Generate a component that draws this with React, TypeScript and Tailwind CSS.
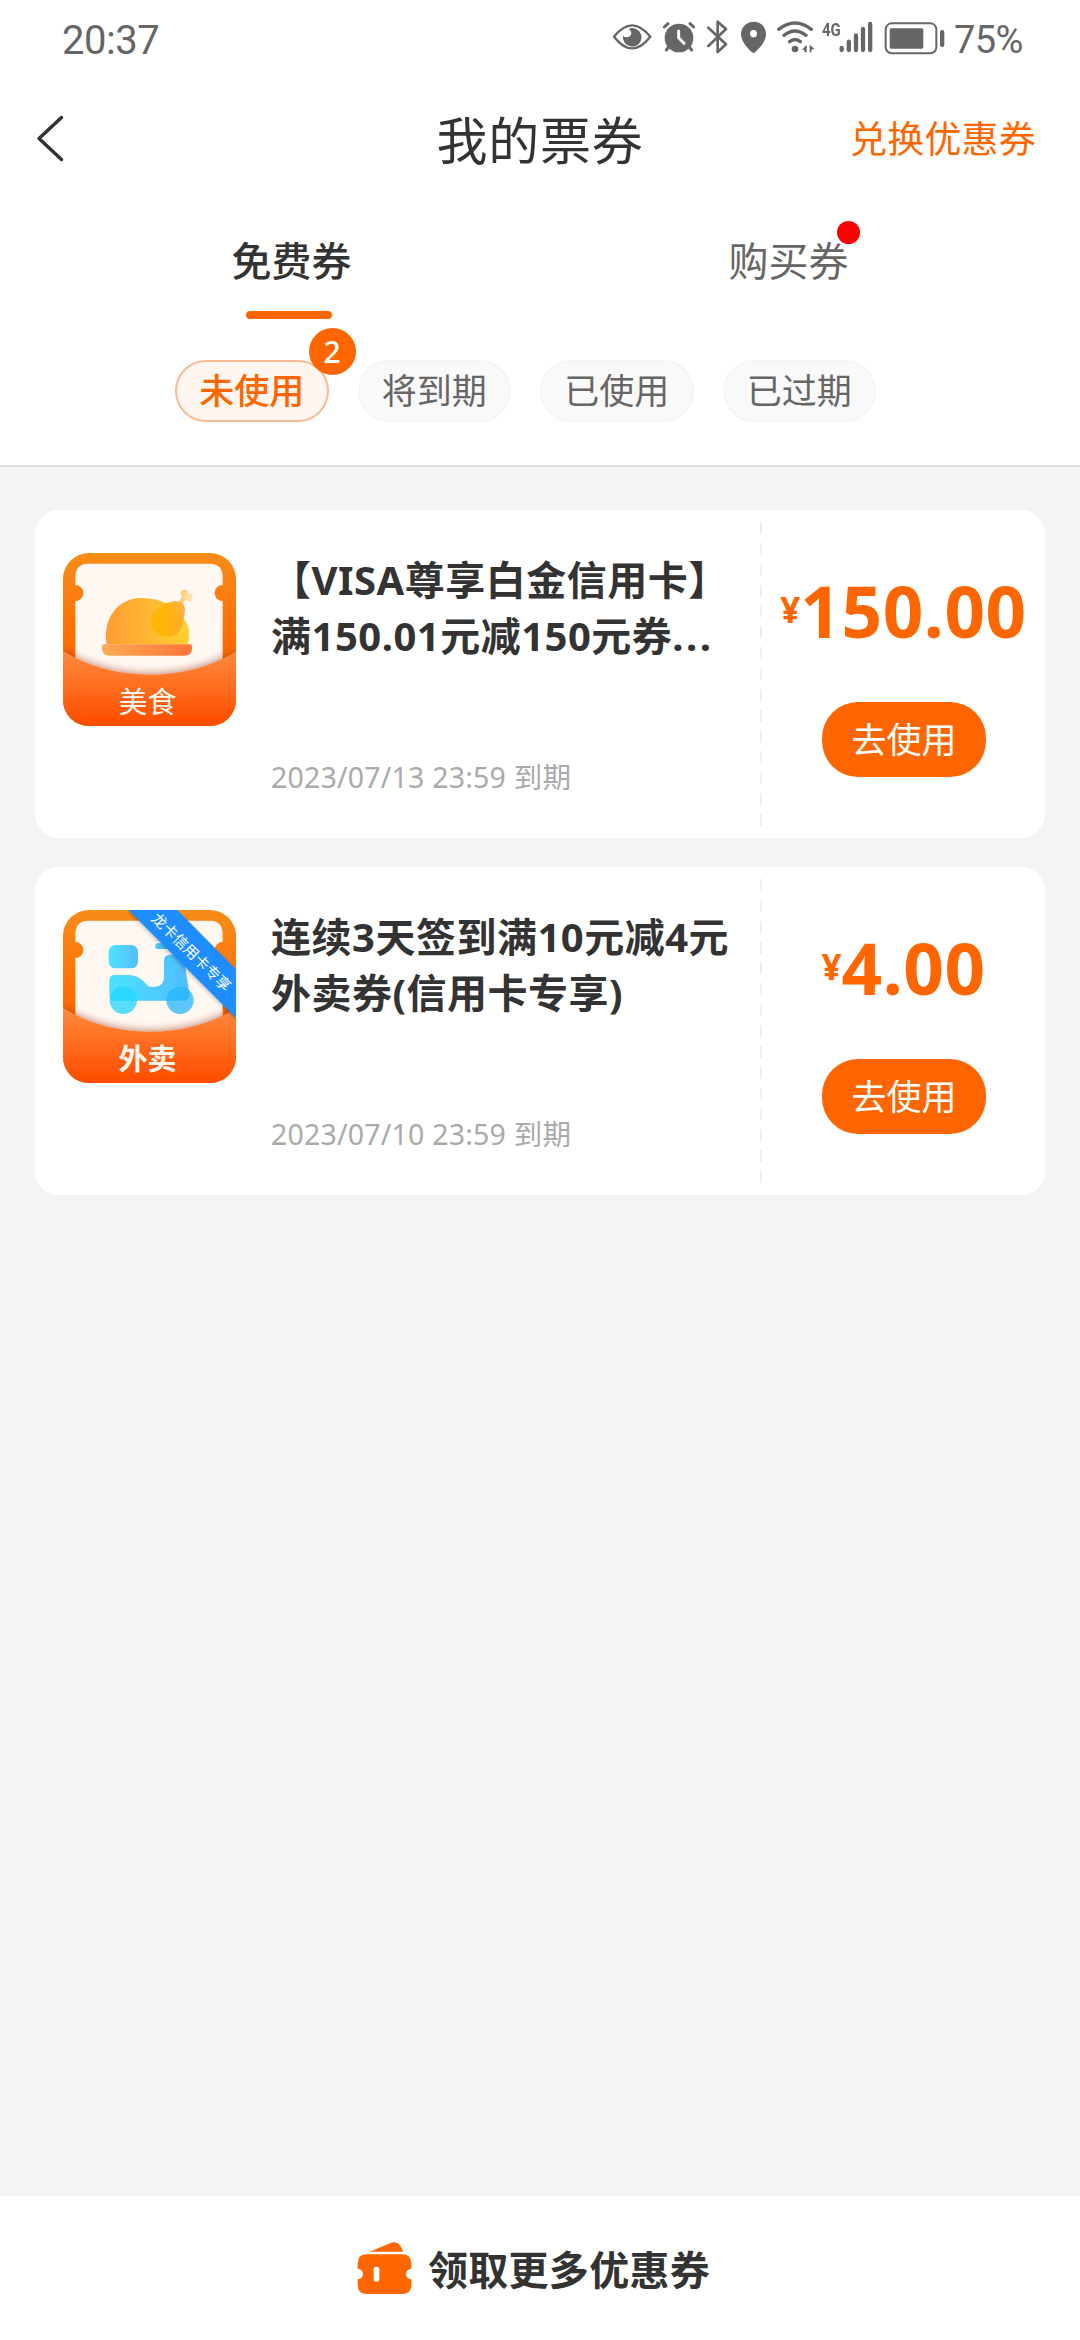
import { ReactNode, useState } from 'react'

type Coupon = {
  id: number
  kind: 'food' | 'takeout'
  title: string
  truncated?: boolean
  expires: string
  amount: string
}

const COUPONS: Coupon[] = [
  {
    id: 1,
    kind: 'food',
    title: '【VISA尊享白金信用卡】满150.01元减150元券',
    truncated: true,
    expires: '2023/07/13 23:59 到期',
    amount: '150.00',
  },
  {
    id: 2,
    kind: 'takeout',
    title: '连续3天签到满10元减4元外卖券(信用卡专享)',
    expires: '2023/07/10 23:59 到期',
    amount: '4.00',
  },
]

const FILTERS = ['未使用', '将到期', '已使用', '已过期']

function StatusBar() {
  return (
    <div className="flex h-20 items-start pl-[62px] text-[#666]">
      <span className="mt-[18px] w-[550px] font-[Roboto] text-[40px] leading-[46px] tracking-[-0.5px]">20:37</span>
      <div className="mt-5 flex h-[35px] shrink-0">
        <svg className="h-[35px] w-10" viewBox="36 60 120 105" fill="none">
          <path d="M42 110Q96 42 151 110Q96 180 42 110Z" stroke="currentColor" strokeWidth="7" strokeLinejoin="round" />
          <path d="M98 84A28 28 0 1 1 69 107A15 15 0 0 0 92 106Q98 95 86 88Q91 84 98 84Z" fill="currentColor" />
        </svg>
        <svg className="ml-2.5 h-[35px] w-[34px]" viewBox="186 60 102 105" fill="none" stroke="currentColor" strokeLinecap="round">
          <circle cx="237" cy="114" r="43" fill="currentColor" stroke="none" />
          <path d="M193 81L204 71M281 81L270 71M206 141L199 150M268 141L275 150" strokeWidth="9" />
          <path d="M236 93V113L252 130" stroke="#fff" strokeWidth="9" strokeLinejoin="round" />
        </svg>
        <svg className="ml-2.5 h-[35px] w-[23px]" viewBox="318 60 69 105" fill="none">
          <path d="M325 83L378 133L353 156V65L378 87L325 138" stroke="currentColor" strokeWidth="8" strokeLinecap="round" strokeLinejoin="round" />
        </svg>
        <svg className="ml-[11px] h-[35px] w-[27px]" viewBox="420 60 81 105">
          <path fillRule="evenodd" fill="currentColor" d="M461 65C483 65 498 82 498 103C498 125 478 145 465 157Q461 161 456 157C443 145 423 125 423 103C423 82 439 65 461 65ZM461 90C454 90 450 95 450 101S454 112 461 112S471 107 471 101S467 90 461 90Z" />
        </svg>
        <svg className="ml-[9px] h-[35px] w-10" viewBox="528 60 120 105" fill="none">
          <path d="M536 88Q585 50 634 88M552 106Q585 80 618 106M569 125Q585 112 601 125" stroke="currentColor" strokeWidth="10" strokeLinecap="round" />
          <circle cx="585" cy="147" r="10" fill="currentColor" />
          <path d="M606 149L620 134V157H613V149ZM629 134L644 147H637V150H634V157H629Z" fill="currentColor" />
        </svg>
        <span className="ml-1.5 mt-px w-[17px] origin-left scale-x-[0.83] font-[Roboto] text-[18px] font-bold leading-[18px]">4G</span>
        <svg className="h-[35px] w-[34px]" viewBox="57 60 102 105">
          <path d="M65 144V150M86.500 125V150M108 106V150M129 87V150M150.500 72V150" stroke="currentColor" strokeWidth="13" strokeLinecap="round" />
        </svg>
        <svg className="ml-[11px] h-[35px] w-[61px]" viewBox="192 60 183 105">
          <rect x="197" y="70" width="152" height="90" rx="18" fill="none" stroke="currentColor" strokeWidth="6" />
          <rect x="209" y="85" width="101" height="61" rx="5" fill="currentColor" />
          <rect x="360" y="90" width="13" height="51" rx="6" fill="currentColor" />
        </svg>
      </div>
      <span className="ml-[9px] mt-[18px] font-[Roboto] text-[38px] leading-[44px] tracking-[-0.6px]">75%</span>
    </div>
  )
}

function TakeoutArt() {
  return (
    <>
      <rect x="137" y="105" width="88" height="70" rx="20" fill="url(#takeout-box)" />
      <rect x="277" y="100" width="80" height="17" rx="7" fill="#4fc3fb" />
      <path
        d="M139 211Q139 195 155 195H194C226 195 243 214 254 227Q257 230 264 230H274C294 230 303 217 303 200V153Q303 134 320 134H340Q361 134 364 153L379 250Q382 272 362 272H157Q139 272 139 254Z"
        fill="url(#takeout-body)"
      />
      <circle cx="181" cy="271" r="41" fill="#1fd6fd" fillOpacity="0.75" />
      <circle cx="351" cy="271" r="41" fill="#25b6fd" fillOpacity="0.75" />
    </>
  )
}

function FoodArt() {
  return (
    <>
      <path d="M131 274C118 192 168 135 235 135C295 135 338 160 361 196C381 221 383 247 374 274Z" fill="url(#food-body)" />
      <path d="M352 150L366 130" stroke="#ffce7c" strokeWidth="13" />
      <circle cx="364" cy="121" r="11" fill="#ffcf7e" />
      <circle cx="377" cy="133" r="12" fill="#ffe0aa" />
      <path
        d="M298 157C322 142 353 140 361 154C371 169 362 195 359 212C352 240 332 252 312 252C284 252 264 231 264 205C264 184 278 169 298 157Z"
        fill="url(#food-leg)"
        fillOpacity="0.9"
      />
      <path d="M123 274H381Q387 274 387 280V286Q387 308 365 308H139Q117 308 117 286V280Q117 274 123 274Z" fill="url(#food-plate)" />
    </>
  )
}

function CouponIcon({ kind }: { kind: Coupon['kind'] }) {
  return (
    <div className="relative size-[173px] shrink-0">
      <svg className="size-[173px] rounded-[26px]" viewBox="0 0 519 519">
        <defs>
          <linearGradient id={`${kind}-frame`} x1="0" y1="0" x2="0" y2="1">
            <stop offset="0" stopColor="#f88d19" />
            <stop offset="0.5" stopColor="#ff6c02" />
          </linearGradient>
          <linearGradient id={`${kind}-pocket`} x1="0" y1="0" x2="0" y2="1">
            <stop offset="0" stopColor="#ff8a3d" />
            <stop offset="0.95" stopColor="#ff4f00" />
          </linearGradient>
          <filter id={`${kind}-shadow`} x="-10%" y="-30%" width="120%" height="150%">
            <feDropShadow dx="0" dy="-8" stdDeviation="10" floodColor="#8a2500" floodOpacity="0.4" />
          </filter>
          <linearGradient id="food-body">
            <stop offset="0" stopColor="#ff9d35" />
            <stop offset="1" stopColor="#ffd12f" />
          </linearGradient>
          <linearGradient id="food-leg">
            <stop offset="0" stopColor="#ffb700" />
            <stop offset="0.4" stopColor="#ffb400" />
            <stop offset="1" stopColor="#ffa733" />
          </linearGradient>
          <linearGradient id="food-plate">
            <stop offset="0" stopColor="#faac55" />
            <stop offset="1" stopColor="#ff7437" />
          </linearGradient>
          <linearGradient id="takeout-box">
            <stop offset="0" stopColor="#4ee3fd" />
            <stop offset="1" stopColor="#55bdff" />
          </linearGradient>
          <linearGradient id="takeout-body">
            <stop offset="0" stopColor="#4ce2fd" />
            <stop offset="1" stopColor="#4fbcff" />
          </linearGradient>
        </defs>
        <rect width="519" height="519" fill={`url(#${kind}-frame)`} />
        <path d="M77 32H439Q479 32 479 72V96A24 24 0 0 0 479 144V400H37V144A24 24 0 0 0 37 96V72Q37 32 77 32Z" fill="#fff7f1" />
        {kind === 'food' ? <FoodArt /> : <TakeoutArt />}
        <path d="M0 294Q116 365 259 365T519 296V519H0Z" fill={`url(#${kind}-pocket)`} filter={`url(#${kind}-shadow)`} />
        {kind === 'takeout' && (
          <>
            <path d="M196 0H343L519 178V324Z" fill="#1e8dff" filter="drop-shadow(-3px 5px 5px rgba(0,0,0,0.2))" />
            <text transform="translate(385 126) rotate(44.500)" y="16" textAnchor="middle" fill="#fff" className="text-[44.500px]">
              龙卡信用卡专享
            </text>
          </>
        )}
      </svg>
      <span
        className={
          kind === 'food'
            ? 'absolute inset-x-0 bottom-1 pr-1 text-center text-[29px] leading-10 text-[#fff6ee]'
            : 'absolute inset-x-0 bottom-1 pr-1 text-center text-[29px] font-bold leading-10 text-[#fff6ee]'
        }
      >
        {kind === 'food' ? '美食' : '外卖'}
      </span>
    </div>
  )
}

function CouponCard({ coupon }: { coupon: Coupon }) {
  return (
    <div className="flex h-[328px] rounded-3xl bg-white pl-7">
      <div className="flex w-[697px] pt-[43px]">
        <CouponIcon kind={coupon.kind} />
        <div className="ml-[35px] flex w-[470px] flex-col">
          <h2 className="-mt-px h-[112px] text-[40px] font-bold leading-[55.500px] tracking-[0.5px] text-[#333]">
            {coupon.title}
            {coupon.truncated && <span className="tracking-[2.500px]">...</span>}
          </h2>
          <p className="mt-[93px] text-[28.500px] leading-10 tracking-[0.2px] text-[#aaa]">{coupon.expires}</p>
        </div>
      </div>
      <div className="my-3 w-0.5 bg-[repeating-linear-gradient(to_bottom,#efefef_0_12px,transparent_12px_20.860px)]" />
      <div className="flex flex-1 flex-col items-center">
        <div className="mt-[59px] flex h-[84px] items-start font-bold leading-[84px] text-[#f60]">
          <span className="-mt-px text-[35px]">¥</span>
          <span className="text-[71px] tracking-[0.6px]">{coupon.amount}</span>
        </div>
        <button className="ml-px mt-[49px] h-[75px] w-[164px] rounded-[36px] bg-[#f60] text-[35px] leading-[75px] text-white">
          去使用
        </button>
      </div>
    </div>
  )
}

function Tab({ active, onClick, children }: { active: boolean; onClick: () => void; children: ReactNode }) {
  return (
    <button onClick={onClick} className="flex flex-1 flex-col items-center">
      <span className={active ? 'text-[40px] font-medium leading-[56px] text-[#333]' : 'text-[40px] leading-[56px] text-[#666]'}>
        {children}
      </span>
      {active && <span className="mr-[5px] mt-[22px] h-2 w-[86px] rounded-full bg-[#f60]" />}
    </button>
  )
}

export default function App() {
  const [tab, setTab] = useState<'free' | 'bought'>('free')
  const [filter, setFilter] = useState<string>(FILTERS[0])

  return (
    <div className="flex h-[2340px] w-[1080px] flex-col overflow-hidden bg-[#f4f4f4] font-['Noto_Sans','Noto_Sans_CJK_SC',sans-serif]">
      <header className="h-[467px] border-b-2 border-[#ddd] bg-white">
        <StatusBar />

        <div className="grid h-[120px] grid-cols-[1fr_auto_1fr] items-center px-9">
          <svg className="mb-1 h-[47px] w-7" viewBox="0 0 28 47" fill="none" stroke="#333" strokeWidth="3.500" strokeLinecap="round" strokeLinejoin="round">
            <path d="M25.500 2.500L3 23.500L25.500 44.500" />
          </svg>
          <h1 className="text-[51px] leading-[76px] tracking-[0.8px] text-[#333]">我的票券</h1>
          <a className="mr-2 justify-self-end pb-0.5 text-[37px] leading-[52px] tracking-[0.2px] text-[#f60]">兑换优惠券</a>
        </div>

        <div className="flex h-[160px] items-start px-[43px] pt-[33px]">
          <Tab active={tab === 'free'} onClick={() => setTab('free')}>免费券</Tab>
          <Tab active={tab === 'bought'} onClick={() => setTab('bought')}>
            <span className="relative">
              购买券
              <i className="absolute -right-[11px] -top-[12px] size-[23px] rounded-full bg-[#f00]" />
            </span>
          </Tab>
        </div>

        <div className="flex gap-[29px] pl-[175px]">
          {FILTERS.map((name) => (
            <button
              key={name}
              onClick={() => setFilter(name)}
              className={
                name === filter
                  ? 'relative h-[62px] w-[153.500px] rounded-full border-2 border-[#f7ba94] bg-[#fff6f0] text-[35px] font-medium leading-[58px] text-[#f60]'
                  : 'relative h-[62px] w-[153.500px] rounded-full border-2 border-[#f5f5f5] bg-[#f9f9f9] text-[35px] leading-[58px] text-[#666]'
              }
            >
              {name}
              {name === '未使用' && (
                <span className="absolute -right-[29px] -top-[34px] size-[47px] rounded-full bg-[#f60] text-[30px] font-medium leading-[47px] text-white">2</span>
              )}
            </button>
          ))}
        </div>
      </header>

      <main className="flex flex-1 flex-col gap-[29px] px-[35px] pt-[43px]">
        {COUPONS.map((coupon) => (
          <CouponCard key={coupon.id} coupon={coupon} />
        ))}
      </main>

      <footer className="flex h-36 items-center justify-center bg-white pr-[13px] pt-1">
        <svg className="mb-1 mr-4 h-[53px] w-[55px]" viewBox="0 0 165 159" fill="#f60">
          <path d="M38 29L101 3Q124 -5 134 19L138 29Z" />
          <path d="M30 37H135Q163 37 163 65V80A16 16 0 0 0 163 112V128Q163 156 135 156H30Q2 156 2 128V112A16 16 0 0 0 2 80V65Q2 37 30 37Z" />
          <rect x="50" y="74" width="17" height="45" rx="8" fill="#fff" />
        </svg>
        <span className="text-[40px] font-bold leading-[56px] tracking-[0.3px] text-[#333]">领取更多优惠券</span>
      </footer>
    </div>
  )
}
